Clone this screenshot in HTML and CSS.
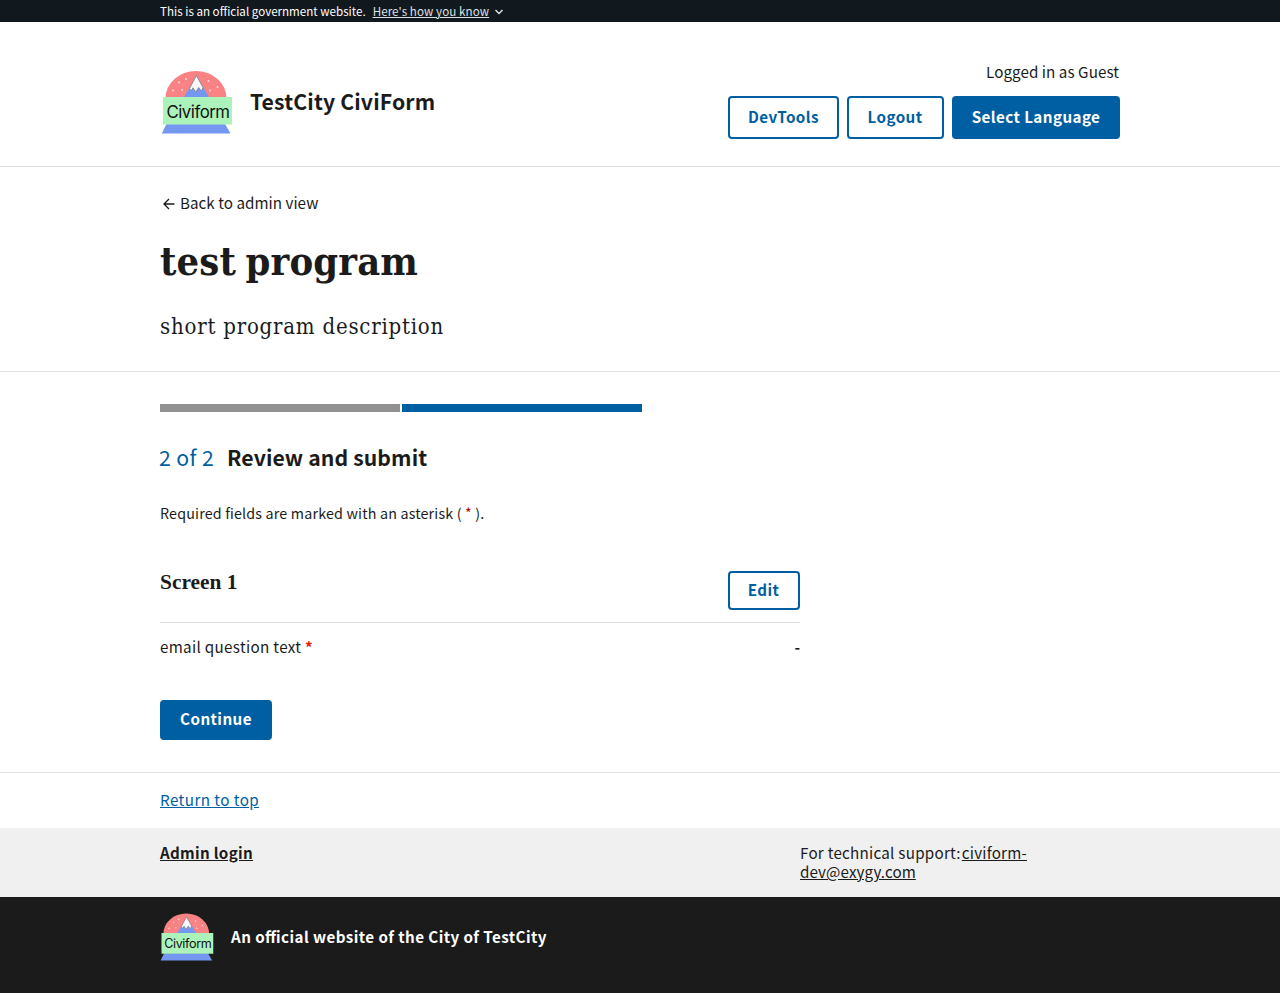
FILE: index.html
```html
<!DOCTYPE html>
<html lang="en">
<head>
<meta charset="utf-8">
<title>test program</title>
<link rel="stylesheet" href="styles.css">
</head>
<body>
<div class="banner"><div class="wrap banner-row">
  <span class="banner-text">This is an official government website.</span>
  <a class="banner-link">Here's how you know</a>
  <svg class="chevron" viewBox="0 0 10 10"><path d="m1.500 3 3.500 3.500L8.500 3" fill="none" stroke="#dfe1e2" stroke-width="1.500"/></svg>
</div></div>
<header class="header"><div class="wrap header-row">
  <div class="brand">
    <svg class="logo" viewBox="0 0 72 66">
      <path d="M4.500 29a30.500 27 0 0 1 61 0z" fill="#f98384"/>
      <path d="M22.500 29 35.500 6.500l13 22.500z" fill="#7498f2"/>
      <path d="M28.500 19.500 35.400 6.500l6.600 12-1.700 3.700-2.600-3.700-3 4.500-2.700-4.200-1.800 3z" fill="#f7f7f7" stroke="#777" stroke-width=".7"/>
      <g fill="#fdd9d6"><circle cx="18" cy="13.500" r="1"/><circle cx="25" cy="10" r="1"/><circle cx="12" cy="21.500" r="1"/><circle cx="21" cy="21" r="1"/><circle cx="47.500" cy="12" r="1"/><circle cx="56.500" cy="18" r="1"/><circle cx="49" cy="21.500" r="1"/></g>
      <path d="M5.500 55h58.500l5.500 9.500H.8z" fill="#7498f2"/>
      <path d="M2 28h69v27.500H2z" fill="#acf3bb"/>
      <text x="5.500" y="48.600" class="logo-text" textLength="63.500">Civiform</text>
    </svg>
    <span class="brand-name">TestCity CiviForm</span>
  </div>
  <div class="account">
    <span class="logged">Logged in as Guest</span>
    <div class="actions">
      <a class="btn outline devtools">DevTools</a>
      <a class="btn outline logout">Logout</a>
      <a class="btn language">Select Language</a>
    </div>
  </div>
</div></header>
<section class="intro"><div class="wrap">
  <a class="back"><svg class="arrow" viewBox="0 0 12 12"><path d="M11.500 6H1.500M6 1 1 6l5 5" fill="none" stroke="#1b1b1b" stroke-width="1.300"/></svg><span class="back-text">Back to admin view</span></a>
  <h1 class="title">test program</h1>
  <p class="description">short program description</p>
</div></section>
<main class="main"><div class="wrap">
  <div class="steps"><div class="step done"></div><div class="step current"></div></div>
  <h2 class="step-heading"><span class="count">2 of 2</span><span class="review">Review and submit</span></h2>
  <p class="required">Required fields are marked with an asterisk ( <span class="star">*</span> ).</p>
  <div class="screen">
    <div class="screen-head"><h3 class="screen-title">Screen 1</h3><a class="btn outline edit">Edit</a></div>
    <div class="question"><span class="question-text">email question text <b class="star">*</b></span><b class="answer">-</b></div>
  </div>
  <a class="btn continue">Continue</a>
</div></main>
<footer>
  <div class="return"><div class="wrap"><a class="return-link">Return to top</a></div></div>
  <div class="support"><div class="wrap support-row">
    <div class="admin"><a class="admin-link">Admin login</a></div>
    <div class="tech"><div><span class="tech-label">For technical support:</span><a class="mail mail-start">civiform-</a></div><div><a class="mail">dev@exygy.com</a></div></div>
  </div></div>
  <div class="identity"><div class="wrap identity-row">
    <svg class="logo small" viewBox="0 0 72 66">
      <path d="M4.500 29a30.500 27 0 0 1 61 0z" fill="#f98384"/>
      <path d="M22.500 29 35.500 6.500l13 22.500z" fill="#7498f2"/>
      <path d="M28.500 19.500 35.400 6.500l6.600 12-1.700 3.700-2.600-3.700-3 4.500-2.700-4.200-1.800 3z" fill="#f7f7f7" stroke="#777" stroke-width=".7"/>
      <g fill="#fdd9d6"><circle cx="18" cy="13.500" r="1"/><circle cx="25" cy="10" r="1"/><circle cx="12" cy="21.500" r="1"/><circle cx="21" cy="21" r="1"/><circle cx="47.500" cy="12" r="1"/><circle cx="56.500" cy="18" r="1"/><circle cx="49" cy="21.500" r="1"/></g>
      <path d="M5.500 55h58.500l5.500 9.500H.8z" fill="#7498f2"/>
      <path d="M2 28h69v27.500H2z" fill="#acf3bb"/>
      <text x="5.500" y="48.600" class="logo-text" textLength="63.500">Civiform</text>
    </svg>
    <span class="official">An official website of the City of TestCity</span>
  </div></div>
</footer>
</body>
</html>
```
FILE: styles.css
```css
* { box-sizing: border-box; }
body { margin: 0; background: #fff; color: #1b1b1b; font: 15.2px/22px "Noto Sans CJK SC", "Open Sans", sans-serif; font-feature-settings: "liga" 1; }
h1, h2, h3, p { margin: 0; }
.wrap { width: 960px; margin: 0 auto; }
.banner { height: 22px; background: #11181e; color: #fff; font-size: 11.6px; }
.banner-row { display: flex; align-items: center; height: 22px; }
.banner-link { margin-left: 7px; color: #dfe1e2; text-decoration: underline; letter-spacing: .08px; }
.chevron { width: 10px; height: 10px; margin: 2px 0 0 5px; }
.header { height: 145px; border-bottom: 1px solid #dfe1e2; }
.header-row { display: flex; justify-content: space-between; }
.brand { display: flex; align-items: center; height: 66px; margin-top: 47px; }
.logo { width: 72px; height: 66px; margin-left: 1px; }
.logo-text { font: 16.8px Inter, sans-serif; fill: #111; }
.brand-name { margin-left: 17px; padding-bottom: 2px; font-size: 21.2px; font-weight: 700; letter-spacing: .14px; }
.account { display: flex; flex-direction: column; align-items: flex-end; padding-top: 38px; }
.logged { letter-spacing: .06px; margin-right: 1px; }
.actions { display: flex; gap: 8px; margin-top: 14px; }
.btn { display: flex; align-items: center; justify-content: center; height: 43px; padding-bottom: 4px; border-radius: 4px; background: #005ea2; color: #fff; font-weight: 700; letter-spacing: .42px; }
.outline { background: #fff; border: 2px solid #005ea2; color: #005ea2; }
.devtools { width: 111px; }
.logout { width: 97px; padding-right: 1px; }
.language { width: 168px; }
.intro { height: 205px; padding-top: 24px; border-bottom: 1px solid #dfe1e2; }
.back { display: flex; align-items: center; height: 22px; letter-spacing: .03px; }
.arrow { width: 12px; height: 12px; margin: 4px 5px 0 3px; }
.title { margin-top: 21px; font: 700 39.5px/54px "DejaVu Serif Condensed", "DejaVu Serif", serif; letter-spacing: .15px; word-spacing: -3px; }
.description { margin-top: 23px; font: 22px/32px "DejaVu Serif Condensed", "DejaVu Serif", serif; letter-spacing: .78px; }
.main { height: 401px; padding-top: 32px; border-bottom: 1px solid #dfe1e2; }
.steps { display: flex; gap: 2px; }
.step { width: 240px; height: 8px; }
.done { background: #919191; }
.current { background: #005ea2; }
.step-heading { display: flex; height: 32px; margin-top: 29px; font-size: 21.2px; line-height: 32px; letter-spacing: .11px; }
.count { margin-left: -1px; width: 68px; color: #005ea2; font-weight: 400; letter-spacing: .4px; }
.required { margin-top: 29px; font-size: 14.3px; letter-spacing: .17px; }
.star { color: #b50909; }
.screen { width: 640px; }
.screen-head { display: flex; justify-content: space-between; height: 99px; padding: 47px 0 12px; border-bottom: 1px solid #dfe1e2; }
.screen-title { font: 700 21.4px/22px "Liberation Serif", serif; }
.edit { width: 72px; height: 39px; padding-right: 1px; }
.question { display: flex; justify-content: space-between; margin-top: 12px; }
.question-text { letter-spacing: .32px; }
.question .star { color: #e52207; }
.continue { width: 112px; height: 40px; margin-top: 43px; }
.return { height: 55px; padding-top: 15px; }
.return-link { color: #005ea2; text-decoration: underline; letter-spacing: .44px; }
.support { height: 69px; background: #f0f0f0; }
.support-row { display: flex; padding-top: 15px; line-height: 19px; }
.admin { width: 640px; font-weight: 700; letter-spacing: .3px; }
.tech { width: 320px; }
.tech-label { letter-spacing: .25px; }
.mail { letter-spacing: .08px; }
.mail-start { margin-left: 1px; letter-spacing: .22px; }
.admin-link, .mail { text-decoration: underline; }
.identity { height: 96px; background: #1b1b1b; color: #fff; }
.identity-row { display: flex; align-items: center; height: 80px; }
.small { width: 54px; height: 49.500px; margin-left: 0; }
.official { margin-left: 17px; padding-bottom: 2px; font-weight: 700; letter-spacing: .42px; }
```
